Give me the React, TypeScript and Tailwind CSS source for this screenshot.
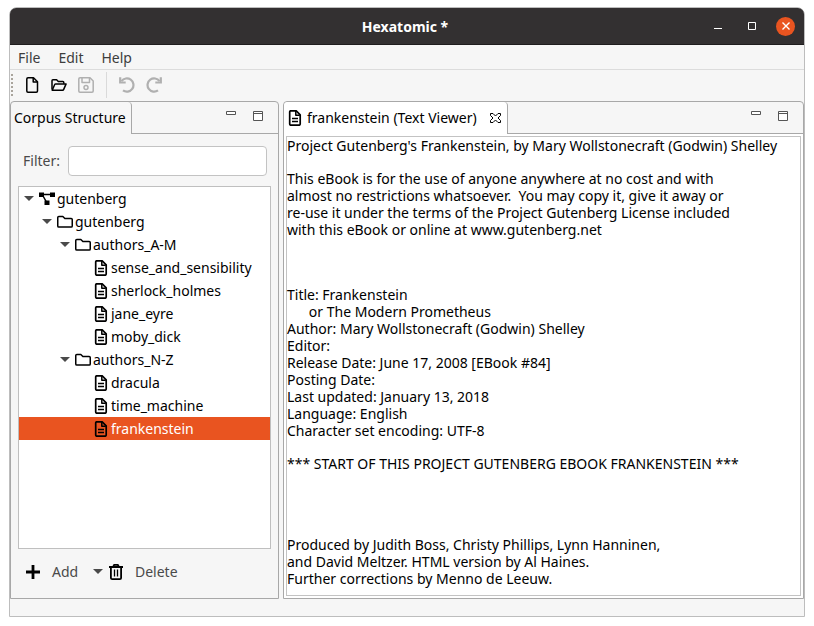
import type { ReactNode } from "react";

type Kind = "corpus" | "folder" | "document";

const NODES: { level: number; kind: Kind; name: string; selected?: boolean }[] = [
  { level: 0, kind: "corpus", name: "gutenberg" },
  { level: 1, kind: "folder", name: "gutenberg" },
  { level: 2, kind: "folder", name: "authors_A-M" },
  { level: 3, kind: "document", name: "sense_and_sensibility" },
  { level: 3, kind: "document", name: "sherlock_holmes" },
  { level: 3, kind: "document", name: "jane_eyre" },
  { level: 3, kind: "document", name: "moby_dick" },
  { level: 2, kind: "folder", name: "authors_N-Z" },
  { level: 3, kind: "document", name: "dracula" },
  { level: 3, kind: "document", name: "time_machine" },
  { level: 3, kind: "document", name: "frankenstein", selected: true },
];

const INDENTS = ["pl-[4px]", "pl-[22px]", "pl-[40px]", "pl-[58px]"];

const LINES = [
  "Project Gutenberg's Frankenstein, by Mary Wollstonecraft (Godwin) Shelley",
  "",
  "This eBook is for the use of anyone anywhere at no cost and with",
  "almost no restrictions whatsoever.  You may copy it, give it away or",
  "re-use it under the terms of the Project Gutenberg License included",
  "with this eBook or online at www.gutenberg.net",
  "",
  "",
  "",
  "Title: Frankenstein",
  "      or The Modern Prometheus",
  "Author: Mary Wollstonecraft (Godwin) Shelley",
  "Editor:",
  "Release Date: June 17, 2008 [EBook #84]",
  "Posting Date:",
  "Last updated: January 13, 2018",
  "Language: English",
  "Character set encoding: UTF-8",
  "",
  "*** START OF THIS PROJECT GUTENBERG EBOOK FRANKENSTEIN ***",
  "",
  "",
  "",
  "",
  "Produced by Judith Boss, Christy Phillips, Lynn Hanninen,",
  "and David Meltzer. HTML version by Al Haines.",
  "Further corrections by Menno de Leeuw.",
];

function Icon({ children }: { children: ReactNode }) {
  return (
    <svg
      aria-hidden="true"
      viewBox="0 0 16 16"
      className="size-4 shrink-0"
      fill="none"
      stroke="currentColor"
      strokeWidth="1.5"
      strokeLinejoin="round"
    >
      {children}
    </svg>
  );
}

function DocumentIcon() {
  return (
    <Icon>
      <path d="M3.8.8h5.400l4 4v9.200c0 .8-.4 1.200-1.200 1.200H3.800c-.7 0-1.100-.4-1.100-1.200V2c0-.8.400-1.200 1.100-1.200z" strokeWidth="1.700" />
      <path d="M8.800 1v4.200h4M5 8.500h6M5 11.500h6" />
    </Icon>
  );
}

function FolderIcon() {
  return (
    <Icon>
      <path d="M.75 3.6c0-.8.3-1.1 1.1-1.1h4l2 2h6.3c.8 0 1.1.3 1.1 1.1v6.3c0 .8-.3 1.1-1.1 1.1H1.85c-.8 0-1.1-.3-1.1-1.1z" />
    </Icon>
  );
}

function CorpusIcon() {
  return (
    <Icon>
      <path d="M3 3.500h10M3.500 4l4.500 8" />
      <path d="M0 1.600h5v4.400H0zM11 1.600h5v4.400h-5zM5.500 9.600h5v4.400h-5z" fill="currentColor" stroke="none" />
    </Icon>
  );
}

function Arrow() {
  return (
    <svg aria-hidden="true" viewBox="0 0 10 5" className="h-[5px] w-[10px] shrink-0 text-[#4a4a4a]">
      <path d="M0 0h10L5 5z" fill="currentColor" />
    </svg>
  );
}

const KIND_ICONS: Record<Kind, ReactNode> = {
  corpus: <CorpusIcon />,
  folder: <FolderIcon />,
  document: <DocumentIcon />,
};

function PanelControls() {
  return (
    <div className="ml-auto flex items-start gap-[17px] pt-[9px] pr-[15px] text-[#555]">
      <button type="button" aria-label="Minimize panel">
        <svg viewBox="0 0 10 10" className="size-[10px]" fill="#fff" stroke="currentColor">
          <path d="M.5.5h9v3h-9z" />
        </svg>
      </button>
      <button type="button" aria-label="Maximize panel">
        <svg viewBox="0 0 10 10" className="size-[10px]" fill="#fff" stroke="currentColor">
          <path d="M.5.5h9v9h-9zM0 2.500h10" />
        </svg>
      </button>
    </div>
  );
}

function TitleBar() {
  return (
    <header className="relative flex h-[37px] shrink-0 items-center justify-end gap-4 rounded-t-md border-b border-[#1f1d1e] bg-[#333031] pr-[9px] text-white">
      <h1 className="pointer-events-none absolute inset-x-0 pr-1 pt-px text-center text-sm font-bold">Hexatomic *</h1>
      <div className="flex gap-[18px]">
        <button type="button" aria-label="Minimize" className="p-[3px]">
          <svg viewBox="0 0 10 10" className="size-[10px]" stroke="currentColor">
            <path d="M1 7.500h8" />
          </svg>
        </button>
        <button type="button" aria-label="Maximize" className="p-[3px]">
          <svg viewBox="0 0 10 10" className="size-[10px]" fill="none" stroke="currentColor">
            <path d="M1.500 1.500h7v7h-7z" />
          </svg>
        </button>
      </div>
      <button
        type="button"
        aria-label="Close"
        className="flex size-[19px] items-center justify-center rounded-full bg-[#e95420]"
      >
        <svg viewBox="0 0 8 8" className="size-2" stroke="currentColor" strokeWidth="1.4">
          <path d="M.5.5l7 7M7.500.5l-7 7" />
        </svg>
      </button>
    </header>
  );
}

function MenuBar() {
  return (
    <nav className="flex h-[25px] shrink-0 items-center gap-[18px] border-b border-[#dcdcdc] px-2 pt-[2px] text-[#3d3d3d]">
      <button type="button">File</button>
      <button type="button">Edit</button>
      <button type="button">Help</button>
    </nav>
  );
}

function ToolBar() {
  return (
    <div role="toolbar" aria-label="Main" className="flex h-[31px] shrink-0 items-center pb-px text-black">
      <div className="mx-[1px] h-[22px] border-l-2 border-dotted border-[#a9a49c]" />
      <div className="flex gap-[11px] pl-[10px]">
        <button type="button" aria-label="New">
          <Icon>
            <path d="M4 .8h5.500l4 4V14c0 .8-.4 1.200-1.200 1.200H4c-.8 0-1.200-.4-1.200-1.200V2C2.800 1.200 3.200.8 4 .8z" />
            <path d="M9.200 1v4h4" />
          </Icon>
        </button>
        <button type="button" aria-label="Open">
          <Icon>
            <path d="M1 12.500V3.700c0-.6.300-.9.900-.9h3.700l1.700 1.700h4.600c.6 0 .9.300.9.900v1.400" />
            <path d="M1.200 13.200l2.500-5.700c.2-.4.500-.6.900-.6h10.500l-2.400 5.500c-.2.500-.6.800-1.100.8z" />
          </Icon>
        </button>
        <button type="button" aria-label="Save" disabled className="text-[#b0b0b0]">
          <Icon>
            <path d="M2 .8h10l3.200 3.200v10c0 .8-.4 1.200-1.200 1.200H2c-.8 0-1.200-.4-1.200-1.200V2C.8 1.200 1.200.8 2 .8z" />
            <path d="M4 1v4.500h7.500V1" />
            <circle cx="8" cy="10.500" r="2" />
          </Icon>
        </button>
      </div>
      <div className="mx-3 h-[26px] w-px bg-[#dadada]" />
      <div className="flex gap-[11px] text-[#b0b0b0]">
        <button type="button" aria-label="Undo" disabled>
          <Icon>
            <path d="M2.500 4.200A6.600 6.600 0 1 1 4 13.400" strokeWidth="2.200" />
            <path d="M1.200.3v5.200h5.500" strokeWidth="2.200" strokeLinejoin="miter" />
          </Icon>
        </button>
        <button type="button" aria-label="Redo" disabled>
          <Icon>
            <path d="M13.500 4.200A6.600 6.600 0 1 0 12 13.400" strokeWidth="2.200" />
            <path d="M14.800.3v5.200H9.300" strokeWidth="2.200" strokeLinejoin="miter" />
          </Icon>
        </button>
      </div>
    </div>
  );
}

function CorpusPanel() {
  return (
    <section className="flex w-[269px] shrink-0 flex-col rounded-t border border-[#a8a8a8]">
      <div className="flex h-8 shrink-0">
        <h2 className="flex w-[121px] shrink-0 items-center rounded-tr border-r border-[#a8a8a8] pl-[3px] text-black">
          Corpus Structure
        </h2>
        <div className="flex flex-1 border-b border-[#a8a8a8]">
          <PanelControls />
        </div>
      </div>
      <div className="flex flex-1 flex-col px-[7px] pt-3">
        <div className="flex items-center gap-2 px-[5px] pr-1 text-[#4a4a4a]">
          <label htmlFor="filter">Filter:</label>
          <input
            id="filter"
            type="text"
            className="h-[30px] min-w-0 flex-1 rounded border border-[#c3c3c3] bg-white px-2 outline-none"
          />
        </div>
        <ul
          role="tree"
          aria-label="Corpus structure"
          className="mt-[10px] flex-1 border border-[#bfbfbf] bg-white text-black"
        >
          {NODES.map((node, i) => (
            <li
              key={i}
              role="treeitem"
              aria-level={node.level + 1}
              aria-selected={!!node.selected}
              className={`flex h-[23px] items-center ${INDENTS[node.level]} ${node.selected ? "bg-[#e95420]" : ""}`}
            >
              <span className="flex w-4 shrink-0 items-center pl-px">{node.kind !== "document" && <Arrow />}</span>
              {KIND_ICONS[node.kind]}
              <span className={`pl-[2px] ${node.selected ? "text-white" : ""}`}>{node.name}</span>
            </li>
          ))}
        </ul>
        <div className="flex h-[49px] shrink-0 items-center pb-1 pl-[7px] text-[#4a4a4a]">
          <button type="button" className="flex w-[68px] items-center gap-[11px]">
            <svg viewBox="0 0 16 16" className="size-4 text-black" stroke="currentColor" strokeWidth="2.800">
              <path d="M1 8h14M8 1v14" />
            </svg>
            Add
          </button>
          <button type="button" aria-label="More add options" className="flex w-[15px]">
            <Arrow />
          </button>
          <button type="button" className="flex items-center gap-[11px]">
            <svg
              viewBox="0 0 16 16"
              className="size-4 text-black"
              fill="none"
              stroke="currentColor"
              strokeWidth="1.800"
            >
              <path d="M1 3h14M5 3l1.200-2.100h3.600L11 3M2.900 3.500v10.400c0 .8.500 1.200 1.300 1.200h7.600c.8 0 1.300-.4 1.300-1.200V3.500" />
              <path d="M6.500 5.500v7M9.500 5.500v7" strokeWidth="1.300" />
            </svg>
            Delete
          </button>
        </div>
      </div>
    </section>
  );
}

function ViewerPanel() {
  return (
    <section className="flex min-w-0 flex-1 flex-col rounded-t border border-[#a8a8a8]">
      <div className="flex h-8 shrink-0">
        <div className="flex w-[224px] shrink-0 items-center rounded-t border-r border-[#a8a8a8] bg-white pl-[3px] text-black">
          <DocumentIcon />
          <h2 className="flex-1 pl-1 whitespace-nowrap">frankenstein (Text Viewer)</h2>
          <button type="button" aria-label="Close tab" className="mr-[6px]">
            <svg viewBox="0 0 11 10" className="h-[10px] w-[11px]" fill="none" stroke="currentColor">
              <path d="M.5.5h2.500l2.500 2.500L8 .5h2.500v2L8 5l2.500 2.500v2H8L5.500 7 3 9.500H.5v-2L3 5 .5 2.500z" />
            </svg>
          </button>
        </div>
        <div className="flex flex-1 border-b border-[#a8a8a8]">
          <PanelControls />
        </div>
      </div>
      <div className="flex flex-1 bg-white p-[2px]">
        <article className="flex-1 border border-[#c3c3c3] whitespace-pre text-black">
          {LINES.map((line, i) => (
            <p key={i} className={line ? "h-[17px] leading-[17px]" : "h-4"}>
              {line}
            </p>
          ))}
        </article>
      </div>
    </section>
  );
}

export default function App() {
  return (
    <main className="flex min-h-screen flex-col bg-white px-[9px] pt-[7px] pb-[9px] font-['Noto_Sans',sans-serif] text-sm">
      <div className="flex flex-1 flex-col rounded-t-lg border border-[#bdbdbd] bg-[#f6f6f6]">
        <TitleBar />
        <MenuBar />
        <ToolBar />
        <div className="flex flex-1 gap-1">
          <CorpusPanel />
          <ViewerPanel />
        </div>
        <footer className="h-[17px] shrink-0" />
      </div>
    </main>
  );
}
